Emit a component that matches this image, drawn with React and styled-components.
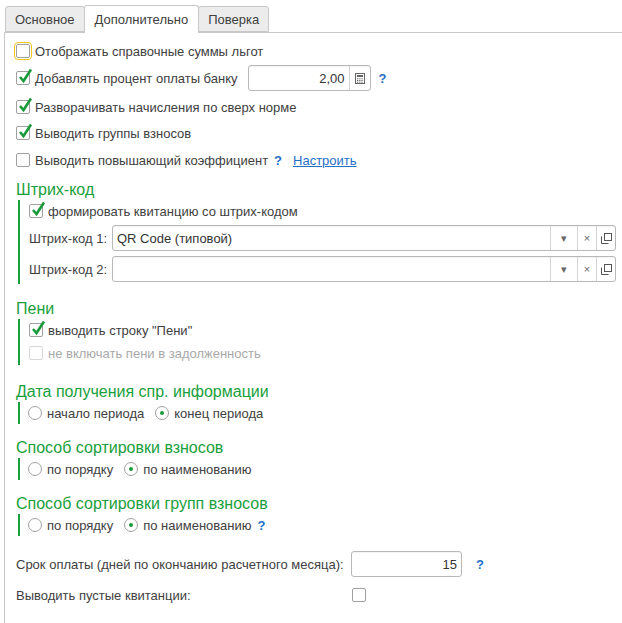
import React from "react";
import styled, { createGlobalStyle } from "styled-components";

const Global = createGlobalStyle`
  html, body { margin: 0; background: #fff; }
  body { font-family: "Liberation Sans", Arial, sans-serif; font-size: 13px; color: #404040; }
`;

const Page = styled.div`
  width: 622px;
  height: 623px;
  padding: 5px 0 0 4px;
  box-sizing: border-box;
  overflow: hidden;
`;

const Tabs = styled.div`
  display: flex;
  align-items: flex-end;
  padding-left: 1px;
  height: 27px;
`;

const Tab = styled.div`
  box-sizing: border-box;
  height: ${(p) => (p.active ? "28px" : "26px")};
  margin-bottom: ${(p) => (p.active ? "-1px" : "0")};
  padding: 0 ${(p) => (p.active ? "10px" : "9px")};
  display: flex;
  align-items: center;
  border: 1px solid #c8c8c8;
  border-bottom: ${(p) => (p.active ? "none" : "1px solid #c8c8c8")};
  border-radius: 3px 3px 0 0;
  background: ${(p) => (p.active ? "#fff" : "#ececec")};
  margin-right: -1px;
  position: relative;
  z-index: ${(p) => (p.active ? 1 : 0)};
  color: #404040;
`;

const Panel = styled.div`
  border-left: 1px solid #c8c8c8;
  border-top: 1px solid #c8c8c8;
  height: 600px;
  padding: 7px 0 0 11px;
  box-sizing: border-box;
`;

const Row = styled.div`
  display: flex;
  align-items: center;
  height: ${(p) => p.h || 26}px;
  gap: ${(p) => p.gap || 5}px;
  color: ${(p) => (p.disabled ? "#a9a9a9" : "#404040")};
`;

const Box = styled.span`
  width: 14px;
  height: 14px;
  box-sizing: border-box;
  border: 1px solid ${(p) => (p.disabled ? "#d8d8d8" : "#a0a0a0")};
  border-radius: 2px;
  background: #fff;
  position: relative;
  flex: none;
  outline: ${(p) => (p.focus ? "1px solid #f5c518" : "none")};
  outline-offset: 1px;
`;

const Tick = styled.svg`
  position: absolute;
  left: 1px;
  top: -4px;
`;

const Check = ({ checked, focus, disabled }) => (
  <Box focus={focus} disabled={disabled}>
    {checked && (
      <Tick width="15" height="16" viewBox="0 0 15 16">
        <path d="M2 9 L5.5 13 L13 1.5" fill="none" stroke="#1a9a3a" strokeWidth="2.6" />
      </Tick>
    )}
  </Box>
);

const Radio = styled.span`
  width: 14px;
  height: 14px;
  box-sizing: border-box;
  border: 1px solid #a0a0a0;
  border-radius: 50%;
  display: inline-flex;
  align-items: center;
  justify-content: center;
  flex: none;
  &::after {
    content: "";
    width: 4px;
    height: 4px;
    border-radius: 50%;
    background: ${(p) => (p.on ? "#1a9a3a" : "transparent")};
  }
`;

const Help = styled.span`
  color: #1f6fc5;
  font-weight: bold;
  margin-left: ${(p) => p.ml || 5}px;
`;

const Link = styled.span`
  color: #1f6fc5;
  text-decoration: underline;
  margin-left: 6px;
`;

const Input = styled.div`
  box-sizing: border-box;
  width: ${(p) => p.w}px;
  height: 26px;
  border: 1px solid #b8b8b8;
  border-radius: 3px;
  display: flex;
  align-items: center;
  margin-left: ${(p) => p.ml || 0}px;
  background: #fff;
  box-shadow: inset 0 1px 1px rgba(0,0,0,0.05);
`;

const Value = styled.div`
  flex: 1;
  padding: 0 4px;
  text-align: ${(p) => (p.right ? "right" : "left")};
  color: #333;
`;

const Btn = styled.div`
  width: 18px;
  height: 100%;
  border-left: 1px solid #d4d4d4;
  display: flex;
  align-items: center;
  justify-content: center;
  color: #666;
  font-size: 11px;
`;

const Title = styled.div`
  color: #19a03c;
  font-size: 16px;
  margin-top: ${(p) => p.mt || 0}px;
  height: 20px;
  line-height: 20px;
`;

const Group = styled.div`
  border-left: 2px solid #19a03c;
  margin-left: 2px;
  padding-left: ${(p) => p.pl || 9}px;
`;

const Label = styled.span`
  width: ${(p) => p.w}px;
  flex: none;
`;

const CalcIcon = () => (
  <svg width="10" height="11" viewBox="0 0 10 11">
    <rect x="0.5" y="0.5" width="9" height="10" fill="none" stroke="#666" />
    <rect x="2" y="2" width="6" height="2" fill="#666" />
    {[0, 1, 2].map((r) =>
      [0, 1, 2].map((c) => <rect key={r + "" + c} x={2 + c * 2.2} y={5.3 + r * 1.7} width="1.3" height="1" fill="#666" />)
    )}
  </svg>
);

const CopyIcon = () => (
  <svg width="11" height="11" viewBox="0 0 11 11">
    <rect x="3.5" y="0.5" width="7" height="7" fill="none" stroke="#555" />
    <path d="M0.5 3.5 V10.5 H7.5" fill="none" stroke="#555" />
  </svg>
);

const Select = ({ value }) => (
  <Input w={504}>
    <Value>{value}</Value>
    <Btn style={{ width: 26 }}>▾</Btn>
    <Btn>×</Btn>
    <Btn><CopyIcon /></Btn>
  </Input>
);

export default function App() {
  return (
    <Page>
      <Global />
      <Tabs>
        <Tab>Основное</Tab>
        <Tab active>Дополнительно</Tab>
        <Tab>Поверка</Tab>
      </Tabs>
      <Panel>
        <Row h={22}><Check focus /><span>Отображать справочные суммы льгот</span></Row>
        <Row h={32}>
          <Check checked /><span>Добавлять процент оплаты банку</span>
          <Input w={123} ml={5}><Value right>2,00</Value><Btn style={{ width: 20 }}><CalcIcon /></Btn></Input>
          <Help ml={3}>?</Help>
        </Row>
        <Row><Check checked /><span>Разворачивать начисления по сверх норме</span></Row>
        <Row><Check checked /><span>Выводить группы взносов</span></Row>
        <Row h={28}><Check /><span>Выводить повышающий коэффициент</span><Help ml={1}>?</Help><Link>Настроить</Link></Row>

        <Title mt={6}>Штрих-код</Title>
        <Group>
          <Row h={22}><Check checked /><span>формировать квитанцию со штрих-кодом</span></Row>
          <Row h={32} gap={2}><Label w={81}>Штрих-код 1:</Label><Select value="QR Code (типовой)" /></Row>
          <Row h={30} gap={2}><Label w={81}>Штрих-код 2:</Label><Select value="" /></Row>
        </Group>

        <Title mt={15}>Пени</Title>
        <Group>
          <Row h={22}><Check checked /><span>выводить строку "Пени"</span></Row>
          <Row h={24} disabled><Check disabled /><span>не включать пени в задолженность</span></Row>
        </Group>

        <Title mt={17}>Дата получения спр. информации</Title>
        <Group pl={8}>
          <Row h={22}><Radio /><span>начало периода</span><Radio on style={{ marginLeft: 6 }} /><span>конец периода</span></Row>
        </Group>

        <Title mt={14}>Способ сортировки взносов</Title>
        <Group pl={8}>
          <Row h={22}><Radio /><span>по порядку</span><Radio on style={{ marginLeft: 6 }} /><span>по наименованию</span></Row>
        </Group>

        <Title mt={14}>Способ сортировки групп взносов</Title>
        <Group pl={8}>
          <Row h={22}><Radio /><span>по порядку</span><Radio on style={{ marginLeft: 6 }} /><span>по наименованию</span><Help ml={1}>?</Help></Row>
        </Group>

        <Row h={32} gap={0} style={{ marginTop: 12 }}>
          <Label w={330}>Срок оплаты (дней по окончанию расчетного месяца):</Label>
          <Input w={111}><Value right>15</Value></Input>
          <Help ml={9}>?</Help>
        </Row>
        <Row h={30} gap={0}>
          <Label w={331}>Выводить пустые квитанции:</Label>
          <Check />
        </Row>
      </Panel>
    </Page>
  );
}
